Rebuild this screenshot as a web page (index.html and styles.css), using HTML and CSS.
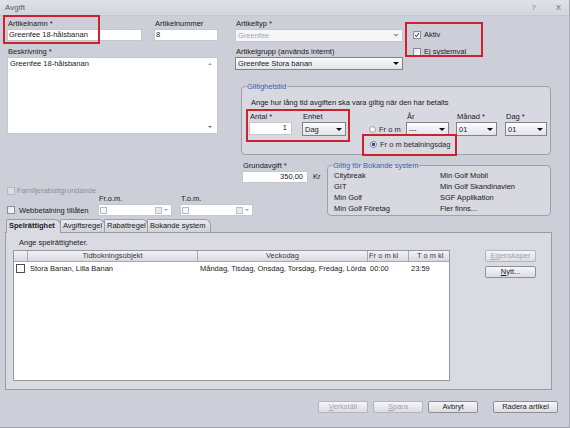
FILE: index.html
```html
<!DOCTYPE html>
<html>
<head>
<meta charset="utf-8">
<link rel="stylesheet" href="styles.css">
</head>
<body>
<div class="win">
  <div class="titlebar">
    <span class="title">Avgift</span>
    <span class="tb-help">?</span>
    <span class="tb-close">X</span>
  </div>

  <div class="top">
    <div class="left">
      <div class="row1">
        <div class="fld f-namn">
          <div class="lbl">Artikelnamn *</div>
          <div class="inp">Greenfee 18-hålsbanan</div>
        </div>
        <div class="fld f-nr">
          <div class="lbl">Artikelnummer</div>
          <div class="inp">8</div>
        </div>
      </div>
      <div class="lbl lbl-besk">Beskrivning *</div>
      <div class="textarea">Greenfee 18-hålsbanan<span class="sb-up"></span><span class="sb-down"></span></div>
      <div class="chk-row fam"><span class="cb cb-dis"></span><span class="dis-text">Familjerabattgrundande</span></div>
      <div class="webb">
        <div class="lbl w-l1">Fr.o.m.</div>
        <div class="lbl w-l2">T.o.m.</div>
        <div class="chk-row w-chk"><span class="cb"></span><span class="w-text">Webbetalning tillåten</span></div>
        <div class="date w-d1"><span class="cb cb-small"></span><span class="cal"></span><span class="arr arr-gray"></span></div>
        <div class="date w-d2"><span class="cb cb-small"></span><span class="cal"></span><span class="arr arr-gray"></span></div>
      </div>
    </div>

    <div class="right">
      <div class="r-top">
        <div class="r-sel">
          <div class="lbl">Artikeltyp *</div>
          <div class="sel sel-dis"><span>Greenfee</span><span class="arr arr-gray"></span></div>
          <div class="lbl lbl-grp">Artikelgrupp (används internt)</div>
          <div class="sel"><span>Greenfee Stora banan</span><span class="arr"></span></div>
        </div>
        <div class="checks">
          <div class="chk-row"><span class="cb cb-on"><svg width="8" height="8" viewBox="0 0 8 8"><path d="M1.6 4.1 L3.3 6.1 L6.6 1.4" fill="none" stroke="#1d2a55" stroke-width="1.3"/></svg></span><span class="c-text">Aktiv</span></div>
          <div class="chk-row c-ej"><span class="cb"></span><span class="c-text">Ej systemval</span></div>
        </div>
      </div>

      <div class="group gt">
        <span class="legend">Giltighetstid</span>
        <div class="gt-desc">Ange hur lång tid avgiften ska vara giltig när den har betalts</div>
        <div class="gt-row">
          <div class="fld f-antal">
            <div class="lbl">Antal *</div>
            <div class="inp inp-num">1</div>
          </div>
          <div class="fld f-enhet">
            <div class="lbl">Enhet</div>
            <div class="sel sel-sm"><span>Dag</span><span class="arr"></span></div>
          </div>
          <div class="radio-col">
            <div class="rc-top">
              <div class="radio r1"><span class="rad"></span><span class="r-text">Fr o m</span></div>
              <div class="fld f-ar">
                <div class="lbl">År</div>
                <div class="sel sel-sm"><span>---</span><span class="arr"></span></div>
              </div>
              <div class="fld f-man">
                <div class="lbl">Månad *</div>
                <div class="sel sel-sm"><span>01</span><span class="arr"></span></div>
              </div>
              <div class="fld f-dag">
                <div class="lbl">Dag *</div>
                <div class="sel sel-sm"><span>01</span><span class="arr"></span></div>
              </div>
            </div>
            <div class="radio r2"><span class="rad rad-on"></span><span class="r-text">Fr o m betalningsdag</span></div>
          </div>
        </div>
      </div>

      <div class="ga-row">
        <div class="fld f-ga">
          <div class="lbl">Grundavgift *</div>
          <div class="inp inp-num">350,00</div>
        </div>
        <div class="kr">Kr</div>
        <div class="group bk">
          <span class="legend">Giltig för Bokande system</span>
          <div class="bk-grid">
            <span>Citybreak</span><span>Min Golf Mobil</span>
            <span>GIT</span><span>Min Golf Skandinavien</span>
            <span>Min Golf</span><span>SGF Applikation</span>
            <span>Min Golf Företag</span><span>Fler finns...</span>
          </div>
        </div>
      </div>
    </div>
  </div>

  <div class="tabs">
    <div class="tab tab-on t1">Spelrättighet</div>
    <div class="tab t2">Avgiftsregel</div>
    <div class="tab t3">Rabattregel</div>
    <div class="tab t4">Bokande system</div>
  </div>
  <div class="panel">
    <div class="p-text">Ange spelrättigheter.</div>
    <div class="p-body">
      <div class="grid">
        <div class="gh"></div>
        <div class="gh">Tidbokningsobjekt</div>
        <div class="gh">Veckodag</div>
        <div class="gh gh-l">Fr o m kl</div>
        <div class="gh gh-t">T o m kl</div>
        <div class="gc gc-cb"><span class="cb cb-grid"></span></div>
        <div class="gc">Stora Banan, Lilla Banan</div>
        <div class="gc">Måndag, Tisdag, Onsdag, Torsdag, Fredag, Lörda</div>
        <div class="gc">00:00</div>
        <div class="gc">23:59</div>
      </div>
      <div class="p-btns">
        <div class="btn btn-dis"><u>E</u>genskaper</div>
        <div class="btn btn-nytt"><u>N</u>ytt...</div>
      </div>
    </div>
  </div>

  <div class="footer">
    <div class="btn fb btn-dis"><u>V</u>erkställ</div>
    <div class="btn fb btn-dis"><u>S</u>para</div>
    <div class="btn fb">Avbryt</div>
    <div class="btn fb fb-wide">Radera artikel</div>
  </div>

  <span class="mark m1"></span>
  <span class="mark m2"></span>
  <span class="mark m3"></span>
  <span class="mark m4"></span>
</div>
</body>
</html>
```

FILE: styles.css
```css
* { box-sizing: border-box; }
html, body { margin: 0; padding: 0; }
body {
  font-family: "Liberation Sans", Arial, sans-serif;
  font-size: 7.5px;
  line-height: 9px;
  color: #1a1a1a;
  background: #cdcfd8;
}
.win {
  width: 570px;
  height: 428px;
  position: relative;
  overflow: hidden;
  background: #cdcfd8;
  border-right: 1px solid #a9abb4;
  border-bottom: 1px solid #9fa1aa;
}
.titlebar {
  height: 16px;
  display: flex;
  align-items: center;
  padding-left: 5px;
  background: linear-gradient(#e0e2e8, #d3d5dc);
  border-bottom: 1px solid #c5c7cf;
}
.title { color: #5a5c66; font-size: 8px; }
.tb-help { margin-left: auto; color: #7a7c86; margin-right: 20px; }
.tb-close { color: #6a6c76; margin-right: 8px; font-size: 8px; }

.top { display: flex; height: 203px; padding: 3px 0 0 7px; }
.left { width: 211px; flex: none; }
.row1 { display: flex; }
.lbl { height: 10px; line-height: 10px; padding-left: 1px; white-space: nowrap; }
.inp {
  height: 12px;
  border: 1px solid #c5c7cf;
  background: #fff;
  line-height: 10px;
  padding-left: 1px;
  white-space: nowrap;
}
.inp-num { text-align: right; padding-right: 4px; }
.f-namn { width: 135px; }
.f-nr { width: 64px; margin-left: 12px; }
.lbl-besk { margin-top: 6px; }
.textarea {
  height: 77px;
  border: 1px solid #c5c7cf;
  background: #fff;
  position: relative;
  padding: 1px 0 0 2px;
  line-height: 9px;
}
.sb-up, .sb-down {
  position: absolute;
  right: 5px;
  width: 0; height: 0;
  border-left: 2px solid transparent;
  border-right: 2px solid transparent;
}
.sb-up { top: 5px; border-bottom: 2px solid #9a9ca4; }
.sb-down { bottom: 5px; border-top: 2px solid #6e7078; }

.chk-row { display: flex; align-items: center; white-space: nowrap; }
.cb {
  width: 8px; height: 8px;
  flex: none;
  border: 1px solid #8c8e98;
  background: linear-gradient(135deg, #e4e5ea, #fdfdfd);
  display: inline-flex;
  align-items: center;
  justify-content: center;
}
.cb svg { display: block; }
.cb-dis { border-color: #b5b7bf; background: #dcdde3; }
.fam { margin-top: 53px; height: 7px; }
.dis-text { margin-left: 2px; color: #8e9098; }
.webb {
  display: grid;
  grid-template-columns: 91px 82px 73px;
  grid-template-rows: 10px 12px;
}
.w-l1 { grid-column: 2; grid-row: 1; line-height: 9px; }
.w-l2 { grid-column: 3; grid-row: 1; line-height: 9px; }
.w-chk { grid-column: 1; grid-row: 2; }
.w-text { margin-left: 4px; }
.w-d1 { grid-column: 2; grid-row: 2; width: 74px; }
.w-d2 { grid-column: 3; grid-row: 2; width: 73px; }
.date {
  height: 12px;
  border: 1px solid #c5c7cf;
  background: #fff;
  display: flex;
  align-items: center;
  padding-left: 1px;
}
.cb-small { width: 7px; height: 7px; border-color: #b8bac2; background: #f6f6f8; }
.cal {
  margin-left: auto;
  width: 7px; height: 7px;
  border: 1px solid #c0c2ca;
  background: #e8e9ed;
}
.arr {
  margin-left: auto;
  margin-right: 3px;
  width: 0; height: 0;
  flex: none;
  border-left: 3px solid transparent;
  border-right: 3px solid transparent;
  border-top: 3px solid #111;
}
.date .arr { margin-left: 2px; margin-right: 3px; border-left-width: 2px; border-right-width: 2px; border-top-width: 2px; }
.arr-gray { border-top-color: #a4a6ae; }

.right { width: 318px; flex: none; margin-left: 17px; }
.r-top { display: flex; }
.r-sel { width: 168px; flex: none; }
.sel {
  height: 13px;
  border: 1px solid #80828c;
  background: linear-gradient(#fcfcfd, #e3e4e9);
  display: flex;
  align-items: center;
  padding-left: 2px;
  white-space: nowrap;
}
.sel-dis { border-color: #c5c7cf; background: #f6f6f8; color: #a6a8b0; }
.lbl-grp { margin-top: 5px; }
.sel-sm { height: 14px; }
.checks { margin-left: 10px; padding-top: 11px; }
.c-text { margin-left: 3px; }
.c-ej { margin-top: 8px; }

.group {
  position: relative;
  border: 1px solid #9ea0aa;
  border-radius: 4px;
  background: #d7d8e0;
}
.legend {
  position: absolute;
  top: -5px;
  left: 4px;
  padding: 0 1px;
  color: #3d5fae;
  white-space: nowrap;
  background: linear-gradient(#cdcfd8 50%, #d7d8e0 50%);
}
.gt {
  margin: 16px 2px 0 6px;
  height: 69px;
  padding-left: 9px;
}
.gt-desc { margin-top: 11px; white-space: nowrap; }
.gt-row { display: flex; margin-top: 5px; }
.f-antal { width: 43px; margin-left: -2px; }
.f-antal .inp { height: 13px; }
.f-enhet { width: 44px; margin-left: 10px; }
.radio-col { margin-left: 23px; }
.rc-top { display: flex; align-items: flex-end; }
.radio { display: flex; align-items: center; white-space: nowrap; }
.r1 { width: 37px; height: 14px; }
.rad {
  width: 7px; height: 7px;
  flex: none;
  border-radius: 50%;
  border: 1px solid #a2a4ae;
  background: radial-gradient(circle, #fff, #e2e3e8);
}
.rad-on {
  border-color: #7c7e88;
  background: radial-gradient(circle, #2f56a8 0 1.6px, #fff 2.1px);
}
.r-text { margin-left: 3px; color: #2a2a2a; }
.f-ar { width: 43px; }
.f-man { width: 41px; margin-left: 7px; }
.f-dag { width: 42px; margin-left: 8px; }
.r2 { margin-top: 4px; margin-left: 1px; height: 9px; }

.ga-row { display: flex; margin-top: 6px; }
.f-ga { width: 66px; margin-left: 7px; }
.kr { width: 14px; margin-left: 5px; margin-top: 10px; height: 12px; line-height: 12px; }
.bk {
  margin-top: 4px;
  width: 224px;
  height: 51px;
}
.bk-grid {
  display: grid;
  grid-template-columns: 106px 1fr;
  grid-auto-rows: 11px;
  padding: 4px 0 0 6px;
  line-height: 11px;
  white-space: nowrap;
}

.tabs { display: flex; margin-left: 6px; height: 13px; position: relative; z-index: 1; }
.tab {
  height: 13px;
  border: 1px solid #9a9ca6;
  border-bottom: none;
  border-radius: 2px 6px 0 0;
  background: linear-gradient(#e9eaef, #d0d2da);
  padding-left: 2px;
  line-height: 12px;
  white-space: nowrap;
  margin-right: -1px;
}
.tab-on { font-weight: bold; background: #d9dae2; height: 14px; }
.t1 { width: 55px; }
.t2 { width: 45px; }
.t3 { width: 44px; }
.t4 { width: 64px; }

.panel {
  margin-left: 5px;
  width: 547px;
  height: 158px;
  border: 1px solid #9a9ca6;
  background: #d9dae2;
  padding: 5px 0 0 7px;
}
.p-text { padding-left: 6px; white-space: nowrap; }
.p-body { display: flex; margin-top: 3px; }
.grid {
  width: 437px;
  height: 131px;
  border: 1px solid #9597a1;
  background: #fff;
  display: grid;
  grid-template-columns: 14px 170px 170px 41px 1fr;
  grid-template-rows: 11px 13px;
  align-content: start;
}
.gh {
  background: linear-gradient(#f4f4f7, #d8d9e0);
  border-right: 1px solid #a6a8b2;
  border-bottom: 1px solid #a6a8b2;
  text-align: center;
  line-height: 10px;
  color: #3a3a3a;
  white-space: nowrap;
}
.gh-l { text-align: left; padding-left: 1px; }
.gh-t { text-align: left; padding-left: 8px; border-right: none; }
.gc {
  line-height: 13px;
  padding-left: 2px;
  white-space: nowrap;
  overflow: hidden;
  min-width: 0;
}
.gc-cb { display: flex; align-items: center; padding-left: 2px; }
.cb-grid { width: 9px; height: 9px; border-color: #4a4c54; background: #fff; }
.p-btns { margin-left: 35px; width: 51px; }
.btn {
  height: 12px;
  border: 1px solid #8c8e98;
  border-radius: 2px;
  background: linear-gradient(#f6f6f8, #dcdde3);
  text-align: center;
  line-height: 10px;
  white-space: nowrap;
  color: #1c1c1c;
}
.btn-dis { color: #a2a4ac; border-color: #b3b5bd; }
.btn-nytt { margin-top: 4px; }

.footer {
  display: flex;
  justify-content: flex-end;
  gap: 5px;
  margin-top: 11px;
  padding-right: 11px;
}
.fb { width: 50px; }
.fb-wide { width: 65px; margin-left: 10px; }

.mark {
  position: absolute;
  border: 2px solid #cc2230;
  pointer-events: none;
}
.m1 { left: 3px; top: 15px; width: 97px; height: 29px; }
.m2 { left: 405px; top: 22px; width: 78px; height: 35px; }
.m3 { left: 246px; top: 109px; width: 104px; height: 33px; }
.m4 { left: 362px; top: 134px; width: 95px; height: 22px; }
```
